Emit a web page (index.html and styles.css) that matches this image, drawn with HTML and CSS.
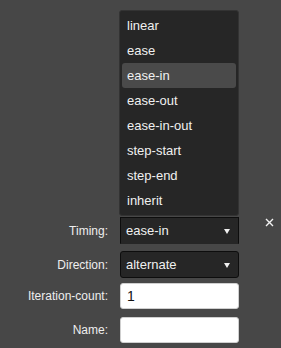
FILE: index.html
```html
<!DOCTYPE html>
<html lang="en">
<head>
    <meta charset="UTF-8">
    <meta name="viewport" content="width=device-width, initial-scale=1.0">
    <title>Animation settings</title>
    <link rel="stylesheet" href="styles.css">
</head>
<body>
    <div class="panel">
        <ul class="menu">
            <li>linear</li>
            <li>ease</li>
            <li class="active">ease-in</li>
            <li>ease-out</li>
            <li>ease-in-out</li>
            <li>step-start</li>
            <li>step-end</li>
            <li>inherit</li>
        </ul>

        <div class="row row-timing">
            <label>Timing:</label>
            <div class="select open">ease-in<span class="arrow"></span></div>
            <button class="close" title="Close">
                <svg width="9" height="9" viewBox="0 0 9 9"><path d="M1 1L8 8M8 1L1 8" stroke="#f2f2f2" stroke-width="1.4"/></svg>
            </button>
        </div>
        <div class="row row-direction">
            <label>Direction:</label>
            <div class="select">alternate<span class="arrow"></span></div>
        </div>
        <div class="row row-count">
            <label>Iteration-count:</label>
            <input type="text" value="1">
        </div>
        <div class="row row-name">
            <label>Name:</label>
            <input type="text" value="">
        </div>
    </div>
</body>
</html>
```
FILE: styles.css
```css
body {
    margin: 0;
    background: #474747;
    font-family: "Liberation Sans", Arial, sans-serif;
    color: #f0f0f0;
}
.panel {
    position: relative;
    height: 348px;
    padding-top: 217px;
    box-sizing: border-box;
}
.menu {
    position: absolute;
    top: 10px;
    left: 119px;
    width: 120px;
    margin: 0;
    padding: 2px 2px;
    box-sizing: border-box;
    list-style: none;
    background: #262626;
    border: 1px solid #333;
    border-radius: 3px;
    font-size: 13px;
}
.menu li {
    height: 25px;
    line-height: 25px;
    padding-left: 5px;
    border-radius: 3px;
}
.menu li.active {
    background: #4a4a4a;
}
.row {
    display: grid;
    grid-template-columns: 108px 119px auto;
    column-gap: 12px;
    align-items: center;
}
.row label {
    text-align: right;
    font-size: 12px;
    color: #eee;
}
.row-timing { height: 27px; }
.row-direction { height: 27px; margin-top: 7px; }
.row-count { height: 26px; margin-top: 5px; }
.row-name { height: 26px; margin-top: 8px; }
.select {
    position: relative;
    height: 27px;
    box-sizing: border-box;
    padding-left: 5px;
    line-height: 25px;
    font-size: 13px;
    background: #262626;
    border: 1px solid #0d0d0d;
    border-radius: 3px;
}
.select.open {
    border-bottom-color: #262626;
    border-radius: 0;
}
.arrow {
    position: absolute;
    right: 8px;
    top: 11px;
    border-left: 3.5px solid transparent;
    border-right: 3.5px solid transparent;
    border-top: 5px solid #f0f0f0;
}
.row input {
    height: 26px;
    box-sizing: border-box;
    margin: 0;
    padding: 0 6px;
    border: 1px solid #cfcfcf;
    border-radius: 3px;
    background: #fff;
    font-family: inherit;
    font-size: 14px;
    color: #111;
}
.close {
    justify-self: start;
    margin-left: 14px;
    margin-top: -16px;
    padding: 0;
    border: none;
    background: none;
    line-height: 0;
}
```
